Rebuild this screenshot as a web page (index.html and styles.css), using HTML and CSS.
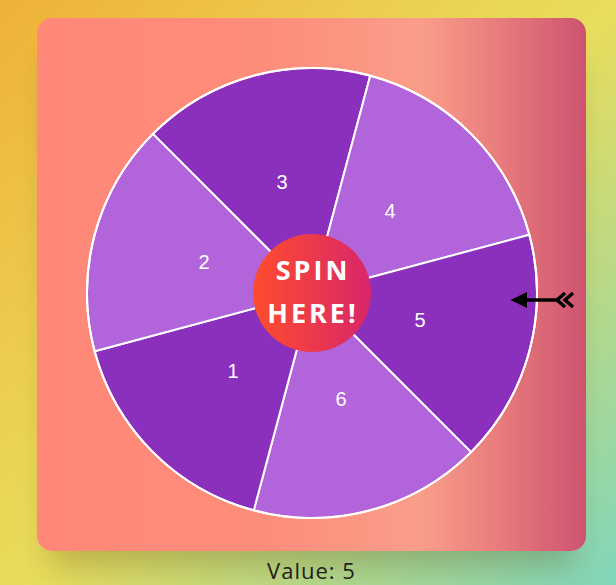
FILE: index.html
```html
<!DOCTYPE html>
<html lang="en">
<head>
<meta charset="utf-8">
<title>Spin Wheel</title>
<link rel="stylesheet" href="styles.css">
</head>
<body>
<main class="page">
  <section class="card">
    <div class="wheel-wrap">
      <svg class="wheel" width="452" height="452" viewBox="-226 -226 452 452" aria-label="Wheel">
        <g class="segments">
          <path class="seg dark" d="M0 0 L-159.10 -159.10 A225 225 0 0 1 58.23 -217.33 Z"/>
          <path class="seg light" d="M0 0 L58.23 -217.33 A225 225 0 0 1 217.33 -58.23 Z"/>
          <path class="seg dark" d="M0 0 L217.33 -58.23 A225 225 0 0 1 159.10 159.10 Z"/>
          <path class="seg light" d="M0 0 L159.10 159.10 A225 225 0 0 1 -58.23 217.33 Z"/>
          <path class="seg dark" d="M0 0 L-58.23 217.33 A225 225 0 0 1 -217.33 58.23 Z"/>
          <path class="seg light" d="M0 0 L-217.33 58.23 A225 225 0 0 1 -159.10 -159.10 Z"/>
        </g>
        <circle class="rim" cx="0" cy="0" r="225"/>
        <g class="labels">
          <text x="-30" y="-111">3</text>
          <text x="78" y="-82">4</text>
          <text x="108" y="27">5</text>
          <text x="29" y="106">6</text>
          <text x="-79" y="78">1</text>
          <text x="-108" y="-31">2</text>
        </g>
      </svg>
      <button class="spin-btn" type="button"><span>SPIN</span><span>HERE!</span></button>
    </div>
    <svg class="pointer" width="70" height="24" viewBox="508 288 70 24" aria-hidden="true">
      <polygon points="510.5,300 527,292 527,308" fill="#000"/>
      <line x1="524" y1="300" x2="560" y2="300" stroke="#000" stroke-width="3.5"/>
      <polyline points="565,293 557,300 565,307" fill="none" stroke="#000" stroke-width="3.5"/>
      <polyline points="573,293 565,300 573,307" fill="none" stroke="#000" stroke-width="3.5"/>
    </svg>
  </section>
  <p class="value">Value: 5</p>
</main>
</body>
</html>
```

FILE: styles.css
```css
html, body {
  margin: 0;
  padding: 0;
}
body {
  min-height: 585px;
  background: linear-gradient(135deg, #f0b138 0%, #ebd555 40%, #e8dd5d 52%, #80d6bb 100%);
  font-family: "Open Sans", "Liberation Sans", sans-serif;
  overflow: hidden;
}
.page {
  display: flex;
  flex-direction: column;
  align-items: flex-start;
  padding: 18px 0 0 37px;
}
.card {
  position: relative;
  width: 549px;
  box-sizing: border-box;
  padding: 49px 0 32px;
  border-radius: 15px;
  background: linear-gradient(to right, #ff8878 0%, #fe8c7b 40%, #f99e89 70%, #e77a7c 85%, #cd536f 100%);
  box-shadow: 0 28px 30px -12px rgba(40, 30, 0, 0.22);
  display: flex;
  justify-content: center;
}
.wheel-wrap {
  display: grid;
  place-items: center;
}
.wheel-wrap > * {
  grid-area: 1 / 1;
}
.wheel {
  display: block;
}
.seg {
  stroke: #fff;
  stroke-width: 2;
  stroke-linejoin: round;
}
.seg.dark { fill: #8a30bc; }
.seg.light { fill: #b264da; }
.rim {
  fill: none;
  stroke: #fff;
  stroke-width: 2;
}
.labels text {
  fill: #fff;
  font-family: "Liberation Sans", Arial, sans-serif;
  font-size: 20px;
  text-anchor: middle;
  dominant-baseline: central;
}
.spin-btn {
  width: 118px;
  height: 118px;
  border-radius: 50%;
  border: none;
  padding: 0 0 5px 3px;
  margin: 0;
  background: linear-gradient(to right, #ff4c2e 0%, #d8266a 100%);
  color: #fff;
  font-family: "Open Sans", "Liberation Sans", sans-serif;
  font-weight: 700;
  font-size: 27px;
  line-height: 43px;
  letter-spacing: 3px;
  display: flex;
  flex-direction: column;
  align-items: center;
  justify-content: center;
  cursor: pointer;
}
.pointer {
  position: absolute;
  left: 471px;
  top: 270px;
}
.value {
  margin: 6px 0 0;
  width: 549px;
  text-align: center;
  font-family: "Open Sans", "Liberation Sans", sans-serif;
  font-weight: 500;
  font-size: 22px;
  line-height: 26px;
  letter-spacing: 1px;
  color: #222;
}
```
